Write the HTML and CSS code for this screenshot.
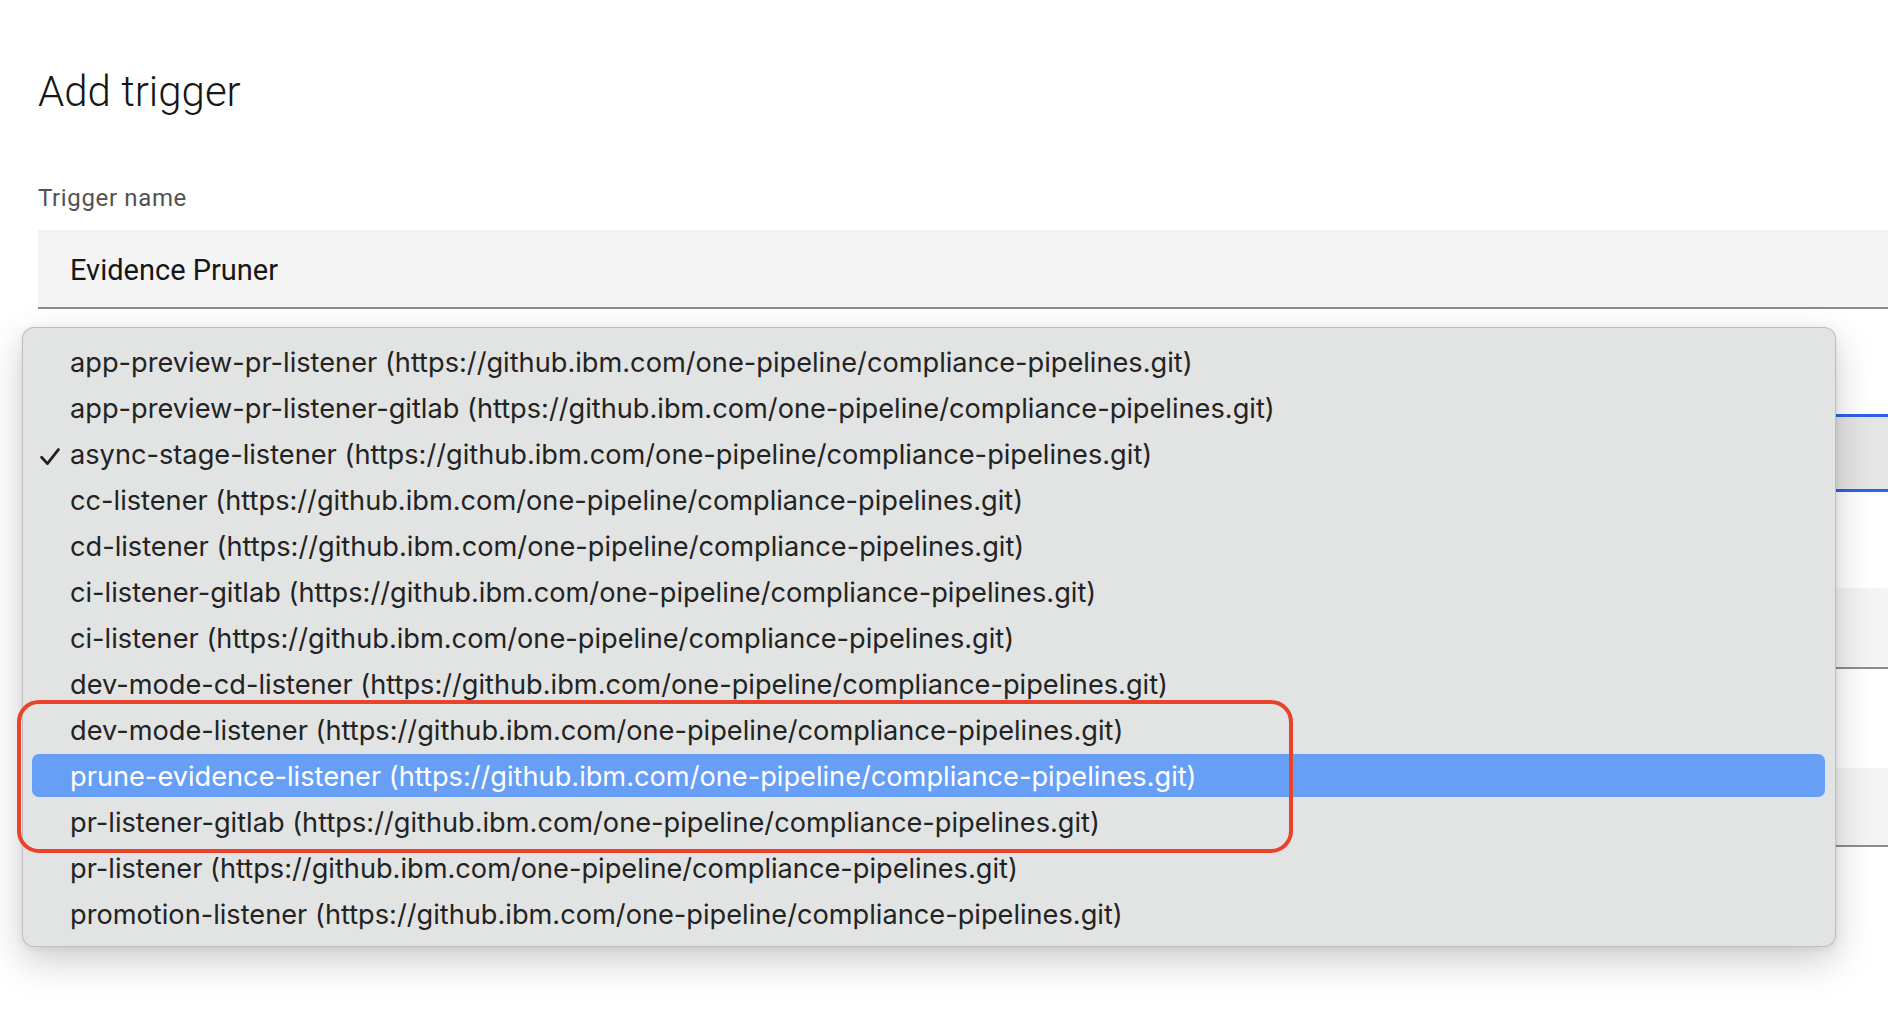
FILE: index.html
```html
<!DOCTYPE html>
<html lang="en">
<head>
<meta charset="utf-8">
<title>Add trigger</title>
<link rel="stylesheet" href="styles.css">
</head>
<body>
<div class="page">
  <h1 class="title">Add trigger</h1>
  <form class="form">
    <div class="group group--first">
      <label class="label">Trigger name</label>
      <div class="input">Evidence Pruner</div>
    </div>
    <div class="group group--second">
      <label class="label">EventListener</label>
      <div class="input input--focus"></div>
    </div>
    <div class="group group--third">
      <label class="label">Worker</label>
      <div class="input"></div>
    </div>
    <div class="group group--fourth">
      <label class="label">Branch</label>
      <div class="input"></div>
    </div>
  </form>
</div>

<ul class="menu" role="listbox">
  <li class="item"><span class="mark"></span>app-preview-pr-listener (https://github.ibm.com/one-pipeline/compliance-pipelines.git)</li>
  <li class="item"><span class="mark"></span>app-preview-pr-listener-gitlab (https://github.ibm.com/one-pipeline/compliance-pipelines.git)</li>
  <li class="item"><span class="mark"><svg class="check" width="20" height="18" viewBox="0 0 20 18"><polyline points="1.6,9.2 7.4,15.6 18.4,1.6" fill="none" stroke="#222" stroke-width="2.8" stroke-linecap="round" stroke-linejoin="round"/></svg></span>async-stage-listener (https://github.ibm.com/one-pipeline/compliance-pipelines.git)</li>
  <li class="item"><span class="mark"></span>cc-listener (https://github.ibm.com/one-pipeline/compliance-pipelines.git)</li>
  <li class="item"><span class="mark"></span>cd-listener (https://github.ibm.com/one-pipeline/compliance-pipelines.git)</li>
  <li class="item"><span class="mark"></span>ci-listener-gitlab (https://github.ibm.com/one-pipeline/compliance-pipelines.git)</li>
  <li class="item"><span class="mark"></span>ci-listener (https://github.ibm.com/one-pipeline/compliance-pipelines.git)</li>
  <li class="item"><span class="mark"></span>dev-mode-cd-listener (https://github.ibm.com/one-pipeline/compliance-pipelines.git)</li>
  <li class="item"><span class="mark"></span>dev-mode-listener (https://github.ibm.com/one-pipeline/compliance-pipelines.git)</li>
  <li class="item item--active"><span class="mark"></span>prune-evidence-listener (https://github.ibm.com/one-pipeline/compliance-pipelines.git)</li>
  <li class="item"><span class="mark"></span>pr-listener-gitlab (https://github.ibm.com/one-pipeline/compliance-pipelines.git)</li>
  <li class="item"><span class="mark"></span>pr-listener (https://github.ibm.com/one-pipeline/compliance-pipelines.git)</li>
  <li class="item"><span class="mark"></span>promotion-listener (https://github.ibm.com/one-pipeline/compliance-pipelines.git)</li>
</ul>

<div class="annotation"></div>
</body>
</html>
```

FILE: styles.css
```css
html, body {
  margin: 0;
  padding: 0;
  background: #ffffff;
  overflow: hidden;
  height: 100%;
}

body {
  position: relative;
  font-family: Roboto, "Liberation Sans", sans-serif;
  color: #161616;
}

.page {
  width: 2000px;
  padding: 68px 0 0 38px;
  box-sizing: border-box;
}

.title {
  margin: 0;
  font-family: Roboto, "Liberation Sans", sans-serif;
  font-weight: 300;
  font-size: 42px;
  line-height: 48px;
  color: #161616;
}

.form {
  display: flex;
  flex-direction: column;
}

.group {
  display: flex;
  flex-direction: column;
}

.group--first { margin-top: 66px; }
.group--second { margin-top: 57px; }
.group--third { margin-top: 48px; }
.group--fourth { margin-top: 51px; }

.label {
  font-size: 24px;
  line-height: 32px;
  letter-spacing: 0.64px;
  color: #525252;
  margin-bottom: 16px;
}

.input {
  box-sizing: border-box;
  height: 79px;
  background: #f4f4f4;
  border-bottom: 2px solid #8d8d8d;
  padding: 4px 0 0 32px;
  font-size: 29px;
  line-height: 73px;
  color: #161616;
}

.input--focus {
  height: 78px;
  background: #e5e5e5;
  border-bottom: none;
  outline: 3px solid #2a62ea;
  outline-offset: -3px;
}

.group--third .input {
  height: 81px;
}

.menu {
  position: absolute;
  left: 22px;
  top: 327px;
  width: 1814px;
  box-sizing: border-box;
  margin: 0;
  padding: 9px 0 11px;
  list-style: none;
  background: #e2e3e3;
  border: 1px solid rgba(0, 0, 0, 0.16);
  border-radius: 12px;
  box-shadow: 0 14px 38px rgba(0, 0, 0, 0.2), 0 2px 8px rgba(0, 0, 0, 0.07);
  font-family: Inter, "Noto Sans", sans-serif;
  font-size: 27.2px;
  color: #232323;
}

.item {
  height: 43px;
  line-height: 45px;
  margin: 3px 10px 0 9px;
  padding-left: 9px;
  white-space: nowrap;
  border-radius: 7px;
}

.item--active {
  background: #679ef6;
  color: #ffffff;
}

.mark {
  display: inline-block;
  width: 29px;
  height: 1px;
}

.check {
  vertical-align: -2px;
  margin-left: -1px;
}

.annotation {
  position: absolute;
  left: 17px;
  top: 700px;
  width: 1276px;
  height: 153px;
  box-sizing: border-box;
  border: 4px solid #e9432c;
  border-radius: 22px;
}
```
